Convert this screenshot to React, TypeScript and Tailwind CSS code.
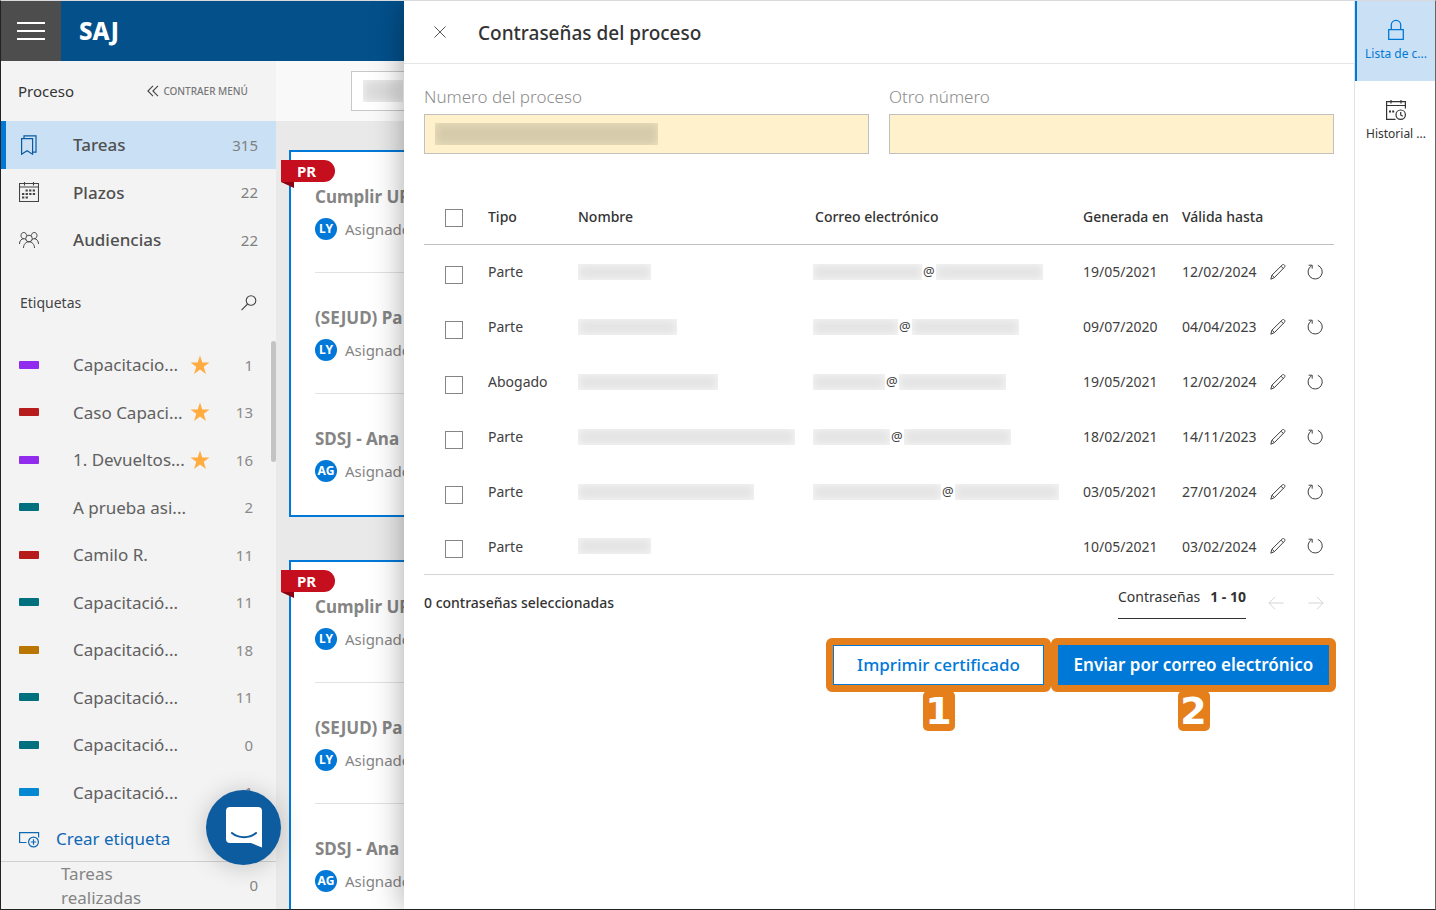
import React from 'react';

type Tag = { name: string; count: number; color: string; starred?: boolean };

type Password = {
  type: string;
  nameWidth: number;
  mail?: [number, number];
  created: string;
  validUntil: string;
};

const tags: Tag[] = [
  { name: 'Capacitacio...', count: 1, color: 'bg-[#912bee]', starred: true },
  { name: 'Caso Capaci...', count: 13, color: 'bg-[#b71c1c]', starred: true },
  { name: '1. Devueltos...', count: 16, color: 'bg-[#912bee]', starred: true },
  { name: 'A prueba asi...', count: 2, color: 'bg-[#00707f]' },
  { name: 'Camilo R.', count: 11, color: 'bg-[#b71c1c]' },
  { name: 'Capacitació...', count: 11, color: 'bg-[#00707f]' },
  { name: 'Capacitació...', count: 18, color: 'bg-[#b97600]' },
  { name: 'Capacitació...', count: 11, color: 'bg-[#00707f]' },
  { name: 'Capacitació...', count: 0, color: 'bg-[#00707f]' },
  { name: 'Capacitació...', count: 1, color: 'bg-[#0288d1]' },
];

const passwords: Password[] = [
  { type: 'Parte', nameWidth: 73, mail: [109, 107], created: '19/05/2021', validUntil: '12/02/2024' },
  { type: 'Parte', nameWidth: 99, mail: [85, 107], created: '09/07/2020', validUntil: '04/04/2023' },
  { type: 'Abogado', nameWidth: 140, mail: [72, 107], created: '19/05/2021', validUntil: '12/02/2024' },
  { type: 'Parte', nameWidth: 217, mail: [77, 107], created: '18/02/2021', validUntil: '14/11/2023' },
  { type: 'Parte', nameWidth: 176, mail: [128, 104], created: '03/05/2021', validUntil: '27/01/2024' },
  { type: 'Parte', nameWidth: 73, created: '10/05/2021', validUntil: '03/02/2024' },
];

const tasks = [
  { title: 'Cumplir UR', initials: 'LY' },
  { title: '(SEJUD) Pa', initials: 'LY' },
  { title: 'SDSJ - Ana', initials: 'AG' },
];

// Icons
const BookmarksIcon = () => (
  <svg width="20" height="20" viewBox="0 0 20 20" fill="none" stroke="currentColor" strokeWidth="1.2">
    <path d="M2.6 3.6h11v15.6l-5.5-3.4-5.5 3.4z" />
    <path d="M5 3.4V.8h12v16.4h-3" />
  </svg>
);

const CalendarIcon = () => (
  <svg width="20" height="20" viewBox="0 0 20 20" fill="none" stroke="currentColor">
    <path d="M.5 1.5h19v18H.5zM.5 5h19M5.5 0v3.5M14.5 0v3.5" strokeWidth="1.1" />
    <path d="M6.5 8.5h10.500M3 12h14M3 15.500h7" strokeWidth="2" strokeDasharray="2.300 1.300" />
  </svg>
);

const PeopleIcon = () => (
  <svg width="20" height="18" viewBox="0 0 20 18" fill="none" stroke="currentColor" strokeWidth="1">
    <circle cx="10" cy="7.500" r="3.300" />
    <path d="M4.500 17c0-3.600 2.300-6.200 5.500-6.200s5.500 2.600 5.500 6.200" />
    <path d="M7.500 4.500C7.500 2.600 6.300 1.500 4.800 1.500S2 2.700 2 4.500s1.200 3.200 2.800 3.200M4.800 7.700C2.200 7.700.5 10 .5 13M4.800 7.700c.8 0 1.400.3 2 .7" />
    <path d="M12.500 4.500c0-1.900 1.200-3 2.700-3S18 2.700 18 4.500s-1.200 3.200-2.800 3.200M15.200 7.700c2.600 0 4.300 2.300 4.300 5.300M15.200 7.700c-.8 0-1.400.3-2 .7" />
  </svg>
);

const SearchIcon = () => (
  <svg width="18" height="18" viewBox="0 0 18 18" fill="none" stroke="currentColor" strokeWidth="1.1">
    <circle cx="11" cy="6.500" r="4.800" />
    <path d="M7.600 10 1.500 16.200" />
  </svg>
);

const StarIcon = () => (
  <svg width="20" height="20" viewBox="0 0 20 20" fill="#ffab40">
    <path d="M10 .5l2.300 6.900h7.200l-5.800 4.300 2.200 7.300-5.900-4.400L4.100 19l2.200-7.300L.5 7.400h7.200z" />
  </svg>
);

const AddTagIcon = () => (
  <svg width="22" height="18" viewBox="0 0 22 18" fill="none" stroke="currentColor" strokeWidth="1.200">
    <path d="M8.500 12.500H1.600V2.600h19v5" />
    <circle cx="15.500" cy="12" r="4.900" />
    <path d="M15.500 9.300v5.400M12.800 12h5.400" />
  </svg>
);

const CloseIcon = () => (
  <svg width="12" height="12" viewBox="0 0 12 12" fill="none" stroke="currentColor" strokeWidth="1">
    <path d="M.5.5l11 11M11.500.5l-11 11" />
  </svg>
);

const LockIcon = () => (
  <svg width="20" height="22" viewBox="0 0 20 22" fill="none" stroke="currentColor" strokeWidth="1.300">
    <path d="M2.700 10.700h14.600v9.700H2.700z" />
    <path d="M5.300 10.500V6a4.700 4.700 0 0 1 9.400 0v4.500" />
  </svg>
);

const HistoryIcon = () => (
  <svg width="22" height="22" viewBox="0 0 22 22" fill="none" stroke="currentColor" strokeWidth="1.200">
    <path d="M10.500 20.400H1.600V2.600h18.800v7M1.600 6.500h18.800M6 1v3.500M16 1v3.500" />
    <path d="M4 12.500h2M7.200 12.500h2" strokeWidth="2" />
    <circle cx="15.700" cy="15.700" r="4.700" />
    <path d="M15.700 13v3l2 1.200" />
  </svg>
);

const PencilIcon = () => (
  <svg width="16" height="16" viewBox="0 0 16 16" fill="none" stroke="currentColor" strokeWidth="1">
    <path d="M.8 15.200l1.100-4L12.200 1c.8-.7 1.600-.6 2.200 0 .7.700.7 1.500 0 2.300L4.300 13.700z" />
    <path d="M2 11.200l2.400 2.400M11 2.200l2.400 2.400" />
  </svg>
);

const RefreshIcon = () => (
  <svg width="16" height="16" viewBox="0 0 16 16" fill="none" stroke="currentColor" strokeWidth="1">
    <path d="M10.800 1.300a7.100 7.100 0 1 1-6.300.5" />
    <path d="M1.600 1.200h3.600v3.500" />
  </svg>
);

const ArrowIcon = ({ flip }: { flip?: boolean }) => (
  <svg width="16" height="14" viewBox="0 0 16 14" fill="none" stroke="currentColor" strokeWidth="1">
    <path d={flip ? 'M.5 7h14.500M9 .8L15.200 7 9 13.200' : 'M15.500 7H1M7 .8L.8 7 7 13.200'} />
  </svg>
);

const DoubleChevronIcon = () => (
  <svg width="12" height="12" viewBox="0 0 12 12" fill="none" stroke="#444" strokeWidth="1.100">
    <path d="M6 .8L.9 6 6 11.200M11 .8L5.900 6l5.100 5.200" />
  </svg>
);

// Smudge that hides personal data
const Redacted = ({ width }: { width: number }) => (
  <span className="inline-block h-4 shrink-0 bg-[#e4e4e4] shadow-[inset_0_0_8px_#f8f8f8]" style={{ width }} />
);

const Checkbox = ({ label }: { label: string }) => (
  <input
    type="checkbox"
    aria-label={label}
    className="block size-[18px] appearance-none border border-[#858585] bg-white checked:bg-[#0078d7]"
  />
);

function NavItem({ icon, label, count, active }: { icon: React.ReactNode; label: string; count: number; active?: boolean }) {
  return (
    <a
      href="#"
      className={`flex items-center border-l-[5px] pr-[18px] pl-[13px] ${
        active ? 'border-[#0078d7] bg-[#cae1f5] text-[#0b5a9f]' : 'border-transparent text-[#444]'
      }`}
    >
      <span className="w-[54px]">{icon}</span>
      <span className="flex-1 text-[17px] font-medium text-[#505050]">{label}</span>
      <span className="text-[15px] text-[#808080]">{count}</span>
    </a>
  );
}

function Sidebar() {
  return (
    <aside className="flex w-[275px] shrink-0 flex-col bg-[#f3f3f3]">
      <div className="flex h-[60px] shrink-0 items-center justify-between pr-7 pl-[17px]">
        <span className="text-[15px] text-[#333]">Proceso</span>
        <button className="flex items-center gap-1 text-[10px] font-medium text-[#777]">
          <DoubleChevronIcon />
          CONTRAER MENÚ
        </button>
      </div>

      <nav className="grid h-[143px] shrink-0 grid-rows-3">
        <NavItem icon={<BookmarksIcon />} label="Tareas" count={315} active />
        <NavItem icon={<CalendarIcon />} label="Plazos" count={22} />
        <NavItem icon={<PeopleIcon />} label="Audiencias" count={22} />
      </nav>

      <div className="flex h-[77px] shrink-0 items-center justify-between pr-[18px] pl-[19px] text-[#444]">
        <span className="text-[14px]">Etiquetas</span>
        <button aria-label="Buscar etiqueta">
          <SearchIcon />
        </button>
      </div>

      <div className="flex min-h-0 flex-1">
        <ul className="flex flex-1 flex-col">
          {tags.map((tag, index) => (
            <li key={index} className="flex flex-1 items-center pr-[18px] pl-[18px]">
              <span className={`h-2 w-5 rounded-[1px] ${tag.color}`} />
              <span className="ml-[34px] w-[117px] text-[17px] text-[#606060]">{tag.name}</span>
              <span className="w-5">{tag.starred && <StarIcon />}</span>
              <span className="flex-1 text-right text-[15px] text-[#8a8a8a]">{tag.count}</span>
            </li>
          ))}
        </ul>
        <div className="h-[121px] w-[5px] rounded-sm bg-[#c4c4c4]" />
      </div>

      <a href="#" className="flex h-[45px] shrink-0 items-center gap-4 pl-[17px] text-[#0f68b4]">
        <AddTagIcon />
        <span className="text-[17px]">Crear etiqueta</span>
      </a>

      <a href="#" className="flex h-12 shrink-0 items-center justify-between border-t border-[#d0d0d0] pr-[18px] pl-[60px] text-[#858585]">
        <span className="w-24 text-[17px] leading-6">Tareas realizadas</span>
        <span className="text-[15px]">0</span>
      </a>
    </aside>
  );
}

function TaskCard() {
  return (
    <section className="relative h-[367px] shrink-0 border-2 border-[#0078d7] bg-white px-6">
      <div className="divide-y divide-[#e2e2e2]">
        {tasks.map((task) => (
          <article key={task.title} className="h-[121px] pt-[33px]">
            <h3 className="text-[17px] leading-6 font-bold text-[#858585]">{task.title}</h3>
            <div className="mt-[9px] flex items-center gap-2 text-[15px] text-[#858585]">
              <span className="flex size-[22px] items-center justify-center rounded-full bg-[#0078d7] text-[12px] font-bold text-white">
                {task.initials}
              </span>
              Asignado
            </div>
          </article>
        ))}
      </div>
      <div className="absolute top-2 -left-[10px]">
        <div className="flex h-[22px] w-[54px] items-center rounded-r-full bg-[#c50f1f] pl-4 text-[15px] font-bold text-white">PR</div>
        <svg width="13" height="6" className="block" fill="#8c0010">
          <path d="M0 0h13v6z" />
        </svg>
      </div>
    </section>
  );
}

function Board() {
  return (
    <main className="flex min-w-0 flex-1 flex-col overflow-hidden bg-[#e9e9e9]">
      <div className="flex h-[60px] shrink-0 items-center bg-[#f9f9f9] pl-[75px]">
        <div className="flex h-10 w-64 items-center border border-[#c8c8c8] bg-white pl-[11px]">
          <span className="h-[22px] w-10 bg-[#dcdcdc] shadow-[inset_0_0_10px_#f4f4f4]" />
          <input aria-label="Buscar" className="min-w-0 flex-1 outline-none" />
        </div>
      </div>
      <div className="flex flex-col gap-[43px] pt-[29px] pl-[13px]">
        <TaskCard />
        <TaskCard />
      </div>
    </main>
  );
}

function Field({ id, label, children }: { id: string; label: string; children?: React.ReactNode }) {
  return (
    <div className="flex min-w-0 flex-1 basis-0 flex-col">
      <label htmlFor={id} className="pb-[2px] text-[17px] leading-[30px] font-light text-[#8c8c8c]">
        {label}
      </label>
      <div className="flex h-10 items-center border border-[#c0c0c0] bg-[#fff1cc] pl-[10px]">
        {children}
        <input id={id} className="w-0 min-w-0 flex-1 bg-transparent outline-none" />
      </div>
    </div>
  );
}

function PasswordTable() {
  return (
    <table className="w-full table-fixed border-b border-[#d4d4d4] text-left text-[14px] text-[#404040]">
      <colgroup>
        <col className="w-16" />
        <col className="w-[90px]" />
        <col />
        <col className="w-[270px]" />
        <col className="w-[99px]" />
        <col className="w-[88px]" />
        <col className="w-[37px]" />
        <col className="w-[27px]" />
      </colgroup>
      <thead>
        <tr className="h-[54px] border-b border-[#c0c0c0] whitespace-nowrap text-[#333]">
          <th className="pt-[2px] pl-[21px]">
            <Checkbox label="Seleccionar todas" />
          </th>
          <th className="font-medium">Tipo</th>
          <th className="font-medium">Nombre</th>
          <th className="pl-[2px] font-medium">Correo electrónico</th>
          <th className="font-medium">Generada en</th>
          <th className="font-medium" colSpan={3}>
            Válida hasta
          </th>
        </tr>
      </thead>
      <tbody>
        {passwords.map((row, index) => (
          <tr key={index} className="h-[55px]">
            <td className="pt-[6px] pl-[21px]">
              <Checkbox label={`Seleccionar ${row.type} ${index + 1}`} />
            </td>
            <td>{row.type}</td>
            <td>
              <span className="flex items-center">
                <Redacted width={row.nameWidth} />
              </span>
            </td>
            <td>
              {row.mail && (
                <span className="flex items-center gap-px">
                  <Redacted width={row.mail[0]} />
                  <span className="text-[13px]">@</span>
                  <Redacted width={row.mail[1]} />
                </span>
              )}
            </td>
            <td>{row.created}</td>
            <td>{row.validUntil}</td>
            <td>
              <button aria-label="Editar" className="block">
                <PencilIcon />
              </button>
            </td>
            <td>
              <button aria-label="Regenerar" className="block">
                <RefreshIcon />
              </button>
            </td>
          </tr>
        ))}
      </tbody>
    </table>
  );
}

// Numbered frame drawn around an action
function Callout({ step, children }: { step: number; children: React.ReactNode }) {
  return (
    <div className="relative flex rounded-md border-[6px] border-[#e57f1c] bg-[#e57f1c]">
      {children}
      <span className="absolute top-full left-1/2 mt-[5px] flex h-10 w-8 -translate-x-1/2 items-center justify-center rounded-[5px] bg-[#e57f1c] font-['DejaVu_Sans',sans-serif] text-[38px] leading-none font-bold text-white">
        {step}
      </span>
    </div>
  );
}

function Drawer() {
  return (
    <div className="absolute inset-y-0 right-0 left-[403px] flex bg-white shadow-[0_0_30px_rgba(0,0,0,0.35)]">
      <section className="min-w-0 flex-1">
        <header className="flex h-[63px] items-center border-b border-[#e6e6e6] pl-[30px] text-[#333]">
          <button aria-label="Cerrar" className="text-[#555]">
            <CloseIcon />
          </button>
          <h2 className="ml-8 pt-[2px] text-[19px] font-medium">Contraseñas del proceso</h2>
        </header>

        <div className="px-5 pt-[18px]">
          <div className="flex gap-5">
            <Field id="numero" label="Numero del proceso">
              <span className="h-[22px] w-[223px] shrink-0 bg-[#d6cbab] shadow-[inset_0_0_10px_#efe3bf]" />
            </Field>
            <Field id="otro" label="Otro número" />
          </div>

          <div className="mt-9">
            <PasswordTable />
          </div>

          <div className="flex items-start justify-between text-[14px] text-[#333]">
            <p className="pt-[17px] font-medium">0 contraseñas seleccionadas</p>
            <div className="flex">
              <p className="flex h-[44px] w-32 justify-between border-b border-[#333] pt-[11px]">
                <span>Contraseñas</span>
                <b>1 - 10</b>
              </p>
              <div className="flex gap-6 pt-[21px] pr-[10px] pl-[22px] text-[#d4d4d4]">
                <button aria-label="Anterior" className="block h-[14px]">
                  <ArrowIcon />
                </button>
                <button aria-label="Siguiente" className="block h-[14px]">
                  <ArrowIcon flip />
                </button>
              </div>
            </div>
          </div>

          <div className="-mr-[2px] mt-[19px] flex justify-end">
            <Callout step={1}>
              <button className="m-px h-10 w-[211px] border border-[#0078d7] bg-white pt-px text-[17px] font-medium text-[#0078d7]">
                Imprimir certificado
              </button>
            </Callout>
            <Callout step={2}>
              <button className="m-px h-10 w-[271px] bg-[#0078d7] pt-px text-[17px] font-semibold text-white">
                Enviar por correo electrónico
              </button>
            </Callout>
          </div>
        </div>
      </section>

      <nav className="w-[81px] shrink-0 border-l border-[#e2e2e2] text-[12px]">
        <a href="#" className="flex h-20 flex-col items-center border-l-2 border-[#0078d7] bg-[#cae1f5] pt-[18px] text-[#0078d7]">
          <LockIcon />
          <span className="mt-[5px] leading-4">Lista de c...</span>
        </a>
        <a href="#" className="flex h-20 flex-col items-center border-l-2 border-transparent pt-[18px] text-[#333]">
          <HistoryIcon />
          <span className="mt-[5px] leading-4">Historial ...</span>
        </a>
      </nav>
    </div>
  );
}

export default function App() {
  return (
    <div className="relative flex h-screen flex-col overflow-hidden border border-t-[#d8dade] border-r-[#666] border-b-[#222] border-l-[#222] font-['Noto_Sans',sans-serif]">
      <header className="flex h-[60px] shrink-0 items-center bg-[#03508b]">
        <button aria-label="Menú" className="flex h-full w-[60px] flex-col items-center justify-center gap-[6px] bg-[#4d4d4d]">
          <span className="h-[2px] w-7 bg-white" />
          <span className="h-[2px] w-7 bg-white" />
          <span className="h-[2px] w-7 bg-white" />
        </button>
        <span className="ml-[18px] text-[24px] font-extrabold text-white">SAJ</span>
      </header>

      <div className="flex min-h-0 flex-1">
        <Sidebar />
        <Board />
      </div>

      <button
        aria-label="Abrir chat"
        className="absolute bottom-11 left-[205px] flex size-[75px] items-center justify-center rounded-full bg-[#0d5ca0] shadow-[0_2px_24px_rgba(0,0,0,0.2)]"
      >
        <svg width="36" height="41" viewBox="0 0 36 41">
          <path d="M4 0h28a4 4 0 0 1 4 4v36.500L25 36H4a4 4 0 0 1-4-4V4a4 4 0 0 1 4-4z" fill="#fff" />
          <path d="M6 26c6.500 5.500 17.500 5.500 24 0" fill="none" stroke="#0d5ca0" strokeWidth="2" strokeLinecap="round" />
        </svg>
      </button>

      <Drawer />
    </div>
  );
}
